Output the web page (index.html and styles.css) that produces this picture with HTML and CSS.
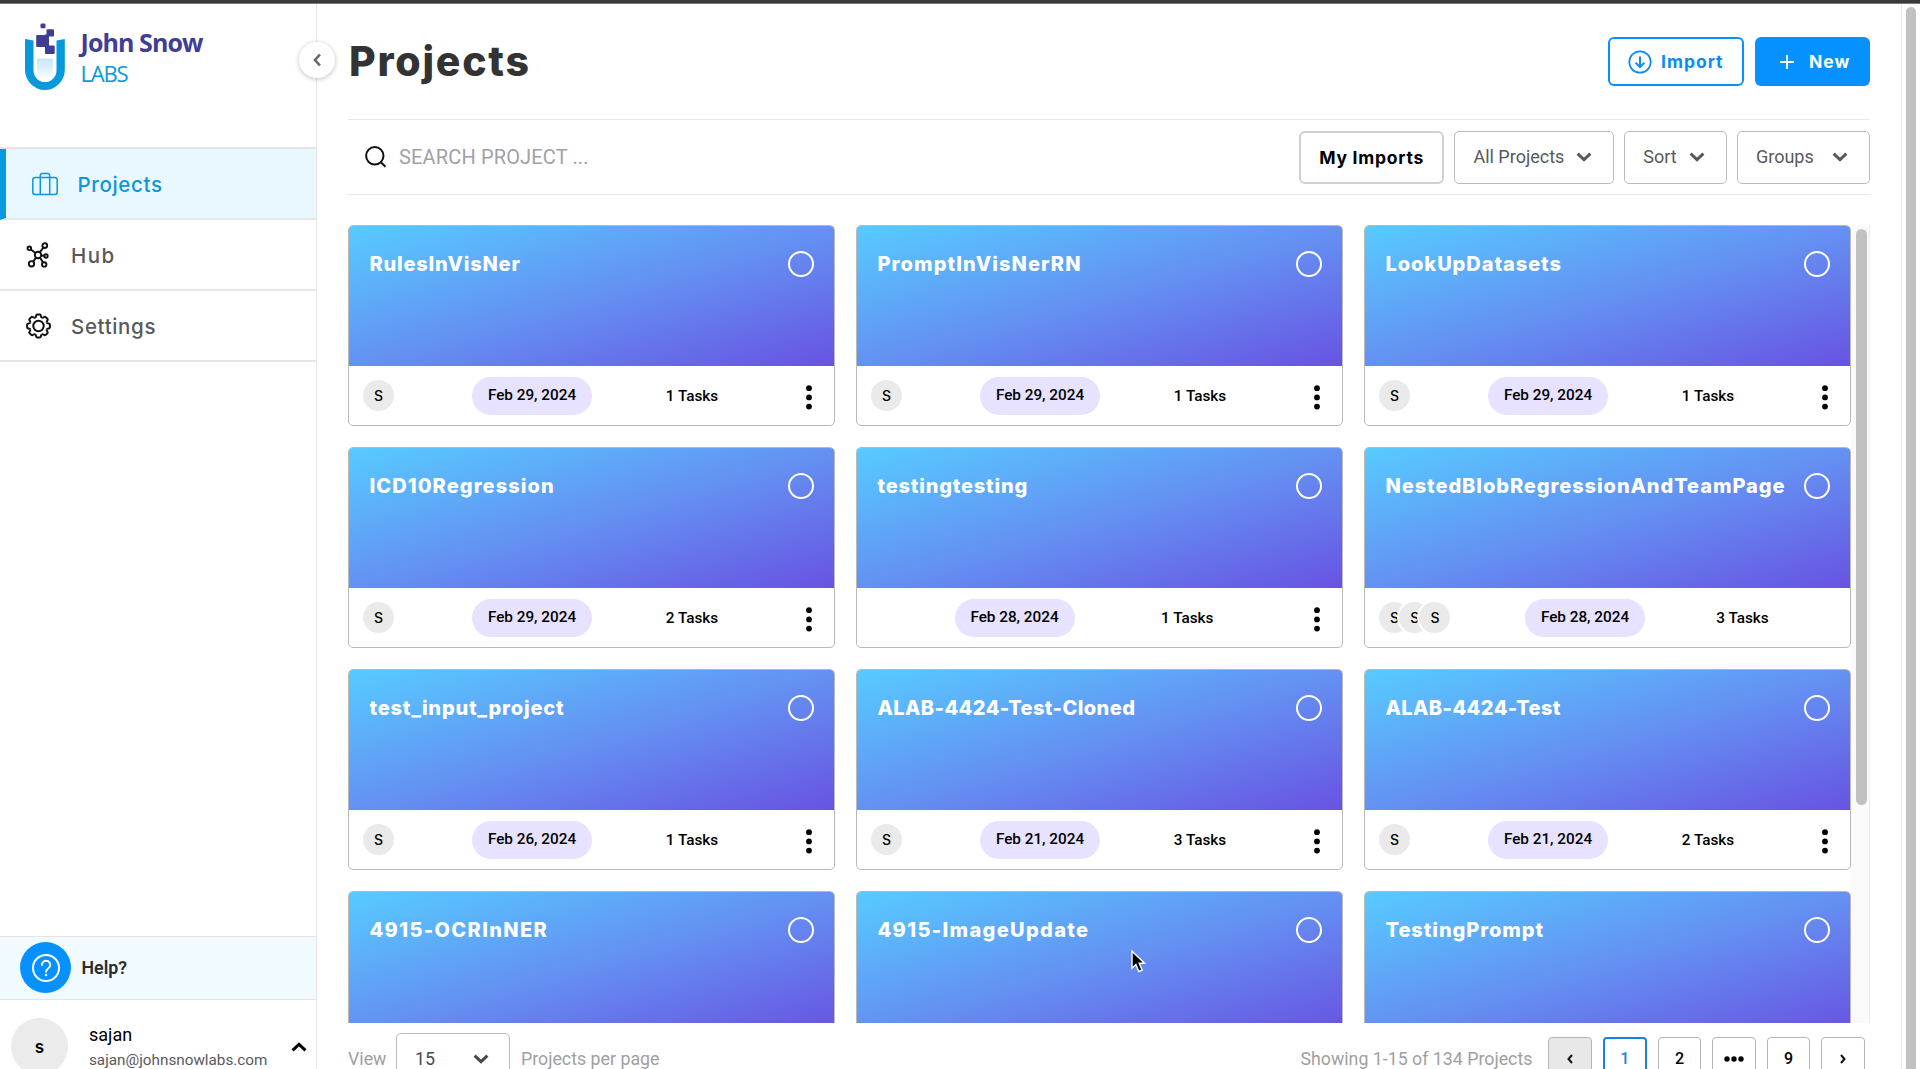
FILE: index.html
```html
<!DOCTYPE html>
<html lang="en">
<head>
<meta charset="utf-8">
<title>Projects</title>
<link rel="stylesheet" href="styles.css">
</head>
<body>
<svg class="defs" width="0" height="0" aria-hidden="true">
  <symbol id="chevron" viewBox="0 0 16 10"><path d="M1.6 1.6 8 7.6l6.400-6" fill="none" stroke="currentColor" stroke-width="3"/></symbol>
  <symbol id="dots" viewBox="0 0 6 25"><circle cx="3" cy="3.200" r="2.900"/><circle cx="3" cy="12.400" r="2.900"/><circle cx="3" cy="21.600" r="2.900"/></symbol>
  <path id="tooth" d="M-3.440-8.310C-2.200-8.800-2.600-10-2.300-10.600Q-2-11.400-1.200-11.400H1.200Q2-11.400 2.300-10.600C2.600-10 2.200-8.800 3.440-8.310"/>
</svg>
<div class="topbar"></div>
<div class="app">
  <aside class="sidebar">
    <div class="brand">
      <svg class="brand-mark" width="42" height="69" viewBox="0 0 42 69">
        <defs><linearGradient id="liquid" x1="0" y1="0" x2="0" y2="1"><stop offset="0" stop-color="#c6e6f7"/><stop offset="1" stop-color="#f7fcff"/></linearGradient></defs>
        <path d="M1 16 9.500 17.500v30a11.500 11.500 0 0 0 23 0v-30l8.300-1.500V47a19.900 19.900 0 0 1-39.800 0z" fill="#0699dc"/>
        <path d="M13 35.500h16v12a8 8 0 0 1-16 0z" fill="url(#liquid)"/>
        <g fill="#3f3d94"><rect x="16.500" y=".5" width="5" height="4.800" rx="1.200"/><rect x="22.500" y="6.200" width="7.500" height="7.300" rx="1"/><rect x="12.200" y="12" width="11.500" height="12" rx="1"/><rect x="21" y="22.500" width="9.700" height="8.600" rx="1"/><path d="M21 11.500h4v12h-4z"/></g>
      </svg>
      <div class="brand-text"><span class="brand-name">John Snow</span><span class="brand-sub">LABS</span></div>
    </div>
    <nav class="nav">
      <a class="nav-item active">
        <svg width="26" height="24" viewBox="0 0 26 24" fill="none" stroke="currentColor" stroke-width="1.500"><rect x=".8" y="5.500" width="24.400" height="17" rx="2.500"/><path d="M8.300 22.500V3.500a2 2 0 0 1 2-2h5.400a2 2 0 0 1 2 2v19"/></svg>
        <span>Projects</span>
      </a>
      <a class="nav-item">
        <svg width="24" height="26" viewBox="0 0 24 26" fill="none" stroke="#111" stroke-width="1.900"><circle cx="12" cy="13" r="3.200"/><circle cx="3.300" cy="6.300" r="1.800"/><circle cx="18.800" cy="3.600" r="2.400"/><circle cx="20" cy="14" r="1.700"/><circle cx="5.500" cy="21.800" r="2.700"/><circle cx="18.200" cy="22.400" r="2.200"/><path d="m4.800 7.500 4.700 3.600M13.700 10.300l3.700-4.700M15.200 13.500l3 .3M10 15.600l-2.800 4M14 15.600l3 4.900"/></svg>
        <span class="hub">Hub</span>
      </a>
      <a class="nav-item">
        <svg width="25" height="26" viewBox="-12.500 -12.500 25 25" fill="none" stroke="#111" stroke-width="2"><circle r="5.200"/><use href="#tooth"/><use href="#tooth" transform="rotate(45)"/><use href="#tooth" transform="rotate(90)"/><use href="#tooth" transform="rotate(135)"/><use href="#tooth" transform="rotate(180)"/><use href="#tooth" transform="rotate(225)"/><use href="#tooth" transform="rotate(270)"/><use href="#tooth" transform="rotate(315)"/></svg>
        <span>Settings</span>
      </a>
    </nav>
    <div class="help">
      <span class="help-icon"><svg width="30" height="30" viewBox="0 0 30 30" fill="none" stroke="#fff" stroke-width="2"><circle cx="15" cy="15" r="13"/><path d="M10.800 12a4.200 4.200 0 1 1 6.400 3.500c-1.400.9-2.200 1.500-2.200 3.300" stroke-linecap="round"/><circle cx="15" cy="22" r="1.300" fill="#fff" stroke="none"/></svg></span>
      <span>Help?</span>
    </div>
    <div class="user">
      <span class="user-avatar">s</span>
      <span class="user-info"><span class="user-name">sajan</span><span class="user-mail">sajan@johnsnowlabs.com</span></span>
      <svg class="user-caret" width="16" height="10"><use href="#chevron"/></svg>
    </div>
    <button class="collapse" aria-label="Collapse"><svg width="8" height="14" viewBox="0 0 8 14" fill="none" stroke="#666" stroke-width="2.600"><path d="M7 1.500 2 7l5 5.500"/></svg></button>
  </aside>

  <main class="main">
    <header class="header">
      <h1>Projects</h1>
      <button class="btn btn-import"><svg width="24" height="24" viewBox="0 0 24 24" fill="none" stroke="currentColor" stroke-width="1.700"><circle cx="12" cy="12" r="10.700"/><path d="M12 6.500v10.500M7.700 12.800l4.300 4.300 4.300-4.300" stroke-width="2"/></svg><span>Import</span></button>
      <button class="btn btn-new"><svg width="14" height="14" viewBox="0 0 14 14" stroke="currentColor" stroke-width="1.800"><path d="M7 0v14M0 7h14"/></svg><span>New</span></button>
    </header>
    <div class="toolbar">
      <svg width="22" height="22" viewBox="0 0 22 22" fill="none" stroke="#111" stroke-width="2"><circle cx="9.800" cy="9.800" r="8.700"/><path d="m15.800 16.200 4.700 4.600"/></svg>
      <span class="search">SEARCH PROJECT ...</span>
      <button class="my-imports">My Imports</button>
      <button class="filter all"><span>All Projects</span><svg width="16" height="10"><use href="#chevron"/></svg></button>
      <button class="filter sort"><span>Sort</span><svg width="16" height="10"><use href="#chevron"/></svg></button>
      <button class="filter groups"><span>Groups</span><svg width="16" height="10"><use href="#chevron"/></svg></button>
    </div>

    <section class="list">
      <div class="cards">
        <article class="card"><div class="card-head"><h2 class="snug">RulesInVisNer</h2><i class="pick"></i></div><div class="card-foot"><div class="team"><b>S</b></div><span class="date">Feb 29, 2024</span><span class="tasks">1 Tasks</span><svg class="more" width="6" height="25"><use href="#dots"/></svg></div></article>
        <article class="card"><div class="card-head"><h2 class="wide">PromptInVisNerRN</h2><i class="pick"></i></div><div class="card-foot"><div class="team"><b>S</b></div><span class="date">Feb 29, 2024</span><span class="tasks">1 Tasks</span><svg class="more" width="6" height="25"><use href="#dots"/></svg></div></article>
        <article class="card"><div class="card-head"><h2>LookUpDatasets</h2><i class="pick"></i></div><div class="card-foot"><div class="team"><b>S</b></div><span class="date">Feb 29, 2024</span><span class="tasks">1 Tasks</span><svg class="more" width="6" height="25"><use href="#dots"/></svg></div></article>

        <article class="card"><div class="card-head"><h2 class="wide">ICD10Regression</h2><i class="pick"></i></div><div class="card-foot"><div class="team"><b>S</b></div><span class="date">Feb 29, 2024</span><span class="tasks">2 Tasks</span><svg class="more" width="6" height="25"><use href="#dots"/></svg></div></article>
        <article class="card"><div class="card-head"><h2 class="snug">testingtesting</h2><i class="pick"></i></div><div class="card-foot no-team"><div class="team"></div><span class="date">Feb 28, 2024</span><span class="tasks">1 Tasks</span><svg class="more" width="6" height="25"><use href="#dots"/></svg></div></article>
        <article class="card"><div class="card-head"><h2>NestedBlobRegressionAndTeamPage</h2><i class="pick"></i></div><div class="card-foot big-team"><div class="team"><b>S</b><b>S</b><b>S</b></div><span class="date">Feb 28, 2024</span><span class="tasks">3 Tasks</span></div></article>

        <article class="card"><div class="card-head"><h2 class="snug">test_input_project</h2><i class="pick"></i></div><div class="card-foot"><div class="team"><b>S</b></div><span class="date">Feb 26, 2024</span><span class="tasks">1 Tasks</span><svg class="more" width="6" height="25"><use href="#dots"/></svg></div></article>
        <article class="card"><div class="card-head"><h2 class="tight">ALAB-4424-Test-Cloned</h2><i class="pick"></i></div><div class="card-foot"><div class="team"><b>S</b></div><span class="date">Feb 21, 2024</span><span class="tasks">3 Tasks</span><svg class="more" width="6" height="25"><use href="#dots"/></svg></div></article>
        <article class="card"><div class="card-head"><h2 class="tight">ALAB-4424-Test</h2><i class="pick"></i></div><div class="card-foot"><div class="team"><b>S</b></div><span class="date">Feb 21, 2024</span><span class="tasks">2 Tasks</span><svg class="more" width="6" height="25"><use href="#dots"/></svg></div></article>

        <article class="card"><div class="card-head"><h2 class="wider">4915-OCRInNER</h2><i class="pick"></i></div></article>
        <article class="card"><div class="card-head"><h2 class="wider">4915-ImageUpdate</h2><i class="pick"></i></div></article>
        <article class="card"><div class="card-head"><h2>TestingPrompt</h2><i class="pick"></i></div></article>
      </div>
      <div class="list-scroll"><div class="list-thumb"></div></div>
    </section>

    <footer class="pager">
      <span class="muted">View</span>
      <button class="page-size"><span>15</span><svg width="16" height="10"><use href="#chevron"/></svg></button>
      <span class="muted">Projects per page</span>
      <span class="muted showing">Showing 1-15 of 134 Projects</span>
      <div class="pages">
        <button class="page prev"><svg width="6" height="10" viewBox="0 0 6 10" fill="none" stroke="#111" stroke-width="2"><path d="M5 1 1.500 5 5 9"/></svg></button>
        <button class="page current">1</button>
        <button class="page">2</button>
        <button class="page"><svg width="20" height="6" viewBox="0 0 20 6"><circle cx="3" cy="3" r="2.700"/><circle cx="10" cy="3" r="2.700"/><circle cx="17" cy="3" r="2.700"/></svg></button>
        <button class="page">9</button>
        <button class="page"><svg width="6" height="10" viewBox="0 0 6 10" fill="none" stroke="#111" stroke-width="2"><path d="M1 1l3.500 4L1 9"/></svg></button>
      </div>
    </footer>
  </main>
  <div class="page-scroll"><div class="page-thumb"></div></div>
</div>
<svg class="cursor" width="16" height="25" viewBox="0 0 16 25"><path d="M1 1.200v17l3.900-3.700 2.900 7 3.400-1.400-3-6.800h5.400z" fill="#000" stroke="#fff" stroke-width="1.400"/></svg>
</body>
</html>
```
FILE: styles.css
```css
* { box-sizing: border-box; }

body {
  margin: 0;
  height: 1069px;
  overflow: hidden;
  display: flex;
  flex-direction: column;
  background: #fff;
  color: #000;
  font-family: Roboto, sans-serif;
}

.defs { position: absolute; }

button {
  margin: 0;
  padding: 0;
  background: none;
  border: 0;
  font: inherit;
  color: inherit;
  display: flex;
  align-items: center;
}

svg { flex: none; display: block; }

.topbar { height: 4px; flex: none; background: #3b3939; border-bottom: 1px solid #777; }

.app { flex: 1; min-height: 0; display: flex; overflow: hidden; }

/* Sidebar */
.sidebar {
  position: relative;
  z-index: 1;
  width: 317px;
  flex: none;
  display: flex;
  flex-direction: column;
  border-right: 1px solid #e6e6e6;
}

.brand { height: 143px; flex: none; display: flex; padding: 19px 0 0 24px; }
.brand-text {
  display: flex;
  flex-direction: column;
  padding: 2px 0 0 14.500px;
  font-family: "Open Sans", sans-serif;
}
.brand-name { font-size: 25px; font-weight: 700; line-height: 34px; letter-spacing: -.900px; color: #3f3d94; }
.brand-sub { font-size: 22px; line-height: 28px; letter-spacing: -1.200px; color: #0699dc; }

.nav { display: flex; flex-direction: column; border-top: 2px solid #e6e6e6; }
.nav-item {
  height: 71px;
  display: flex;
  align-items: center;
  gap: 20px;
  padding: 1px 0 0 26px;
  border-bottom: 2px solid #e6e6e6;
  font: 500 20.500px Inter, sans-serif;
  letter-spacing: .65px;
  color: #58595b;
}
.nav-item .hub { letter-spacing: 1.500px; padding-left: 1px; }
.nav-item.active { border-left: 6px solid #0699dc; background: #e9f8ff; color: #0c97d8; padding-left: 25.500px; }

.help {
  margin-top: auto;
  height: 64px;
  flex: none;
  display: flex;
  align-items: center;
  gap: 10.500px;
  padding: 0 0 1px 20px;
  border-top: 1px solid #e4e4e4;
  border-bottom: 1px solid #e4e4e4;
  background: #f1fbff;
  font-size: 17.800px;
  font-weight: 600;
  color: #2b2b2b;
}
.help-icon {
  width: 51px;
  height: 51px;
  border-radius: 50%;
  background: #0591ff;
  display: flex;
  align-items: center;
  justify-content: center;
}

.user { height: 69px; flex: none; display: flex; align-items: flex-start; padding: 18px 9px 0 11px; overflow: hidden; }
.user-avatar {
  width: 57px;
  height: 57px;
  flex: none;
  border-radius: 50%;
  background: #ebebeb;
  font: 600 17px/59px Inter, sans-serif;
  text-align: center;
}
.user-info { display: flex; flex-direction: column; padding: 5px 0 0 21px; }
.user-name { font-size: 18px; line-height: 24px; }
.user-mail { font-size: 15.250px; line-height: 26px; color: #58595b; }
.user-caret { margin: 24px 0 0 auto; transform: rotate(180deg); }

.collapse {
  position: absolute;
  right: -19px;
  top: 38px;
  width: 36px;
  height: 36px;
  border-radius: 50%;
  background: #fff;
  justify-content: center;
  box-shadow: 0 1px 5px rgba(0, 0, 0, .25);
}
.collapse svg { margin-right: 1px; }

/* Main column */
.main { width: 1553px; flex: none; padding-left: 31px; display: flex; flex-direction: column; }

.header { height: 116px; flex: none; display: flex; align-items: flex-start; border-bottom: 1px solid #e8e8e8; }
h1 {
  margin: 0 auto 0 0;
  padding: 33px 0 0 1px;
  font: 800 41px/48px Inter, sans-serif;
  letter-spacing: 1.750px;
  color: #333;
}
.btn { height: 49px; margin-top: 33px; border-radius: 6px; font: 700 17.500px Inter, sans-serif; letter-spacing: 1px; }
.btn-import { width: 136px; border: 2px solid #0591ff; color: #0d8bf2; gap: 9px; padding-left: 18px; }
.btn-new { width: 115px; margin-left: 11px; background: #0591ff; color: #fff; gap: 15px; padding-left: 25px; }

.toolbar { height: 75px; flex: none; display: flex; align-items: center; padding-left: 17px; border-bottom: 1px solid #e8e8e8; }
.search { margin: 0 auto 0 12px; font-size: 20px; letter-spacing: .15px; color: #a0a1a6; }
.my-imports {
  width: 145px;
  height: 53px;
  justify-content: center;
  border: 2px solid #d0d0d0;
  border-radius: 6px;
  font: 700 17.500px Inter, sans-serif;
  letter-spacing: .75px;
}
.filter {
  height: 53px;
  margin-left: 10.300px;
  padding: 0 21px 1px 18px;
  justify-content: space-between;
  border: 1px solid #bbb;
  border-radius: 5px;
  font-size: 18px;
  color: #58595b;
}
.all { width: 159.500px; }
.sort { width: 102.500px; }
.groups { width: 133px; }

/* Project cards */
.list { height: 828px; flex: none; padding-top: 30px; display: flex; overflow: hidden; }
.cards {
  display: grid;
  grid-template-columns: repeat(3, 487px);
  grid-auto-rows: 201px;
  gap: 21px;
  align-content: start;
}
.card { border: 1px solid #b9b9b9; border-radius: 5px; overflow: hidden; background: #fff; }
.card-head {
  height: 140px;
  display: flex;
  align-items: flex-start;
  justify-content: space-between;
  padding: 25px 20px 0 20.500px;
  background: linear-gradient(to bottom right, #57cbff, #648ff2 52%, #6853e2);
}
h2 { margin: 0; font: 800 20px/26px Inter, sans-serif; letter-spacing: .93px; color: #fff; white-space: nowrap; }
h2.tight { letter-spacing: .42px; }
h2.snug { letter-spacing: .8px; }
h2.wide { letter-spacing: 1.080px; }
h2.wider { letter-spacing: 1.350px; }
.pick { width: 26px; height: 26px; flex: none; border: 2.500px solid #fff; border-radius: 50%; }

.card-foot {
  height: 59px;
  display: grid;
  grid-template-columns: 123px 120px 200px 33px;
  align-items: center;
  font-size: 15.300px;
  font-weight: 500;
}
.card-foot.no-team { grid-template-columns: 97.500px 120px 225.500px 33px; }
.card-foot.big-team { grid-template-columns: 160px 120px 195px; }
.team { display: flex; padding-left: 14px; }
.team b {
  width: 31px;
  height: 31px;
  border-radius: 50%;
  background: #eaeaea;
  box-shadow: 0 0 0 2px #fff;
  font: 500 14px/31px Inter, sans-serif;
  text-align: center;
}
.team b + b { margin-left: -10.800px; }
.date { height: 38px; border-radius: 19px; background: #e6e2ff; line-height: 37px; text-align: center; }
.tasks { text-align: center; }
.more { justify-self: center; margin-top: 4px; }

.list-scroll { width: 19px; margin-left: auto; padding: 4px 0 0 5px; background: #fafafa; border-right: 1px solid #ececec; }
.list-thumb { width: 10.500px; height: 576px; border-radius: 6px; background: #c1c1c1; }

/* Footer */
.pager { height: 46px; flex: none; display: flex; align-items: flex-start; font-size: 17.800px; line-height: 51px; overflow: hidden; padding-top: 10px; }
.muted { color: #a0a0a0; }
.page-size {
  width: 114px;
  height: 51px;
  margin: 0 11px 0 9.500px;
  padding: 0 20px 0 18px;
  justify-content: space-between;
  border: 1px solid #bbb;
  border-radius: 5px;
  color: #4a4a4e;
}
.showing { margin-left: auto; }
.pages { display: flex; gap: 11px; padding: 3.500px 5px 0 16px; }
.page { width: 43.600px; height: 44px; justify-content: center; border: 1px solid #b5b5b5; border-radius: 4px; font-size: 16px; font-weight: 500; }
.page.prev { background: #e8e8e8; }
.page.current { border: 2px solid #1f7fe0; color: #1f7fe0; }

.page-scroll { flex: none; width: 19px; margin-left: auto; padding: 3px 0 0 4px; border-left: 1px solid #e8e8e8; background: #fdfdfd; overflow: hidden; }
.page-thumb { width: 10px; height: 100%; border-radius: 5px 5px 0 0; background: #c1c1c1; }

.cursor { position: absolute; left: 1131px; top: 950px; }
```
